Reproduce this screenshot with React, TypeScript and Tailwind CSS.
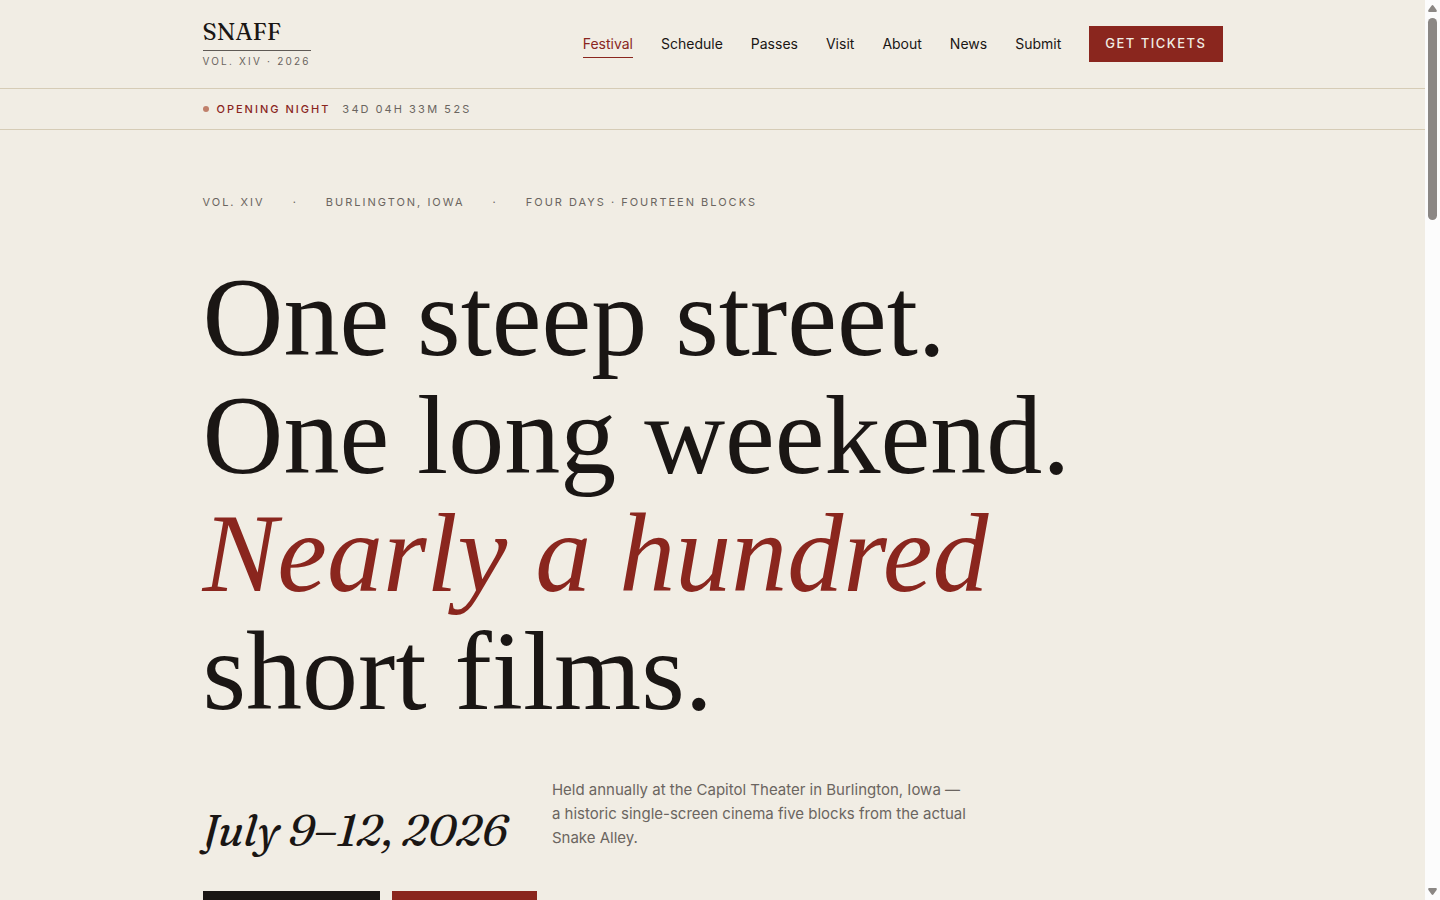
import React from 'react';

const SERIF = "font-['Fraunces','Liberation_Serif',serif]";

const navItems = [
  { label: 'Festival', href: '#festival', active: true },
  { label: 'Schedule', href: '#schedule' },
  { label: 'Passes', href: '#passes' },
  { label: 'Visit', href: '#visit' },
  { label: 'About', href: '#about' },
  { label: 'News', href: '#news' },
  { label: 'Submit', href: '#submit' },
];

const Header: React.FC = () => (
  <header className="border-b border-[#d6ccb6]">
    <div className="mx-auto flex h-[88px] max-w-[1100px] items-center justify-between px-10">
      <a href="#home" className="flex flex-col">
        <span className={`${SERIF} border-b border-[#5f5a55] pb-1 text-2xl leading-7 text-[#1a1614]`}>SNAFF</span>
        <span className="pt-0.5 pb-0.5 text-[10px] leading-4 tracking-[2.2px] text-[#6b6560]">VOL. XIV · 2026</span>
      </a>
      <nav className="flex items-center gap-7 text-sm">
        {navItems.map((item) => (
          <a
            key={item.label}
            href={item.href}
            className={`border-b pt-1 pb-[3px] ${
              item.active ? 'border-[#8a261e] text-[#8a261e]' : 'border-transparent text-[#1a1614]'
            }`}
          >
            {item.label}
          </a>
        ))}
        <a
          href="#tickets"
          className="flex h-9 items-center bg-[#8a261e] px-4 pb-0.5 text-[13px] font-medium tracking-[1.5px] text-[#f1ede4]"
        >
          GET TICKETS
        </a>
      </nav>
    </div>
  </header>
);

const Countdown: React.FC = () => (
  <div className="border-b border-[#d6ccb6]">
    <div className="mx-auto flex h-10 max-w-[1100px] items-center px-10 text-[11px] tracking-[2px]">
      <span className="mr-2 h-1.5 w-1.5 rounded-full bg-[#c0806b]" />
      <span className="mr-3 font-medium text-[#8a261e]">OPENING NIGHT</span>
      <span className="text-[#6b6560] tabular-nums">34D 04H 33M 52S</span>
    </div>
  </div>
);

const Hero: React.FC = () => (
  <section className="mx-auto max-w-[1100px] px-10 pt-16">
    <div className="flex gap-7 text-[11px] leading-4 tracking-[2px] text-[#6b6560]">
      <span>VOL. XIV</span>
      <span>·</span>
      <span>BURLINGTON, IOWA</span>
      <span>·</span>
      <span>FOUR DAYS · FOURTEEN BLOCKS</span>
    </div>

    {/* The display face is narrower and higher in contrast than the text serif */}
    <h1 className="mt-12 font-['Liberation_Serif',serif] text-[112px] leading-[118px] text-[#1a1614]">
      One steep street.
      <br />
      One long weekend.
      <br />
      <em className="text-[#8a261e]">Nearly a hundred</em>
      <br />
      short films.
    </h1>

    <div className="mt-12 flex items-end gap-11">
      <p className={`${SERIF} text-[44px] leading-10 whitespace-nowrap text-[#1a1614] italic`}>July 9–12, 2026</p>
      <p className="max-w-[420px] text-[15px] leading-6 text-[#6b6560]">
        Held annually at the Capitol Theater in Burlington, Iowa — a historic single-screen cinema five blocks from the
        actual Snake Alley.
      </p>
    </div>

    <div className="mt-[41px] flex gap-3">
      <button type="button" aria-label="View schedule" className="h-12 w-[177px] bg-[#1a1614]" />
      <button type="button" aria-label="Get passes" className="h-12 w-[145px] bg-[#8a261e]" />
    </div>
  </section>
);

const ScrollRail: React.FC = () => (
  <div className="flex w-[15px] shrink-0 flex-col items-center bg-[#fcfcfc] py-1" aria-hidden="true">
    <svg width="9" height="8" viewBox="0 0 9 8" fill="#8b8784">
      <path d="M4.5 1 Q5 1 5.5 1.7 L8.6 6 Q9.2 8 8 8 H1 Q-.2 8 .4 6 L3.5 1.7 Q4 1 4.5 1Z" />
    </svg>
    <div className="mt-1.5 h-[202px] w-[9px] rounded-full bg-[#8b8784]" />
    <svg className="mt-auto" width="9" height="8" viewBox="0 0 9 8" fill="#8b8784">
      <path d="M4.5 7 Q4 7 3.5 6.3 L.4 2 Q-.2 0 1 0 H8 Q9.2 0 8.6 2 L5.5 6.3 Q5 7 4.5 7Z" />
    </svg>
  </div>
);

export default function App() {
  return (
    <div className="flex h-screen overflow-hidden bg-[#f1ede4] font-['Inter',sans-serif]">
      <main className="min-w-0 flex-1 overflow-hidden">
        <Header />
        <Countdown />
        <Hero />
      </main>
      <ScrollRail />
    </div>
  );
}
